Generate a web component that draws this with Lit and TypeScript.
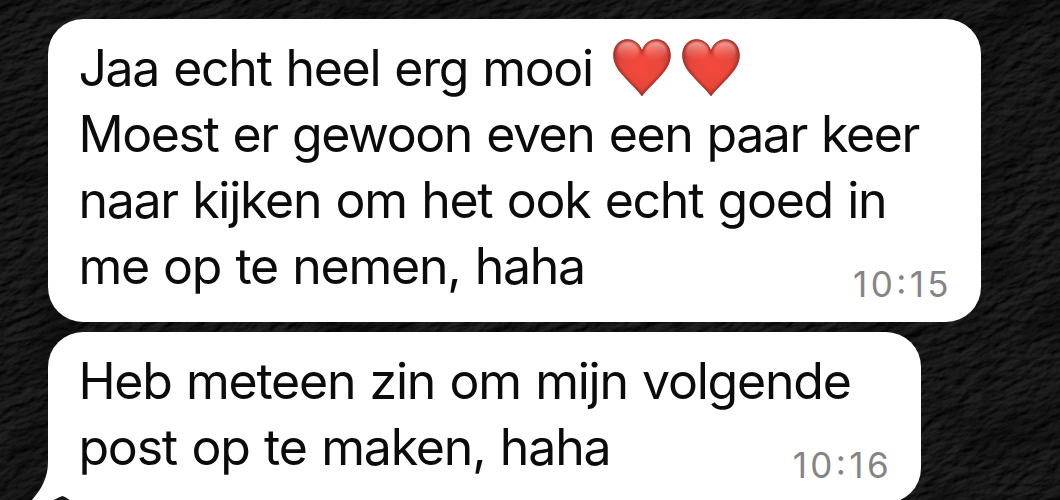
import { LitElement, html, css } from "lit";
import { customElement, property } from "lit/decorators.js";
import { styleMap } from "lit/directives/style-map.js";

interface Line {
  text: string;
  tracking: number;
  hearts?: number;
}

interface Message {
  lines: Line[];
  time: string;
  width: number;
  tail?: boolean;
}

const MESSAGES: Message[] = [
  {
    width: 933,
    time: "10:15",
    lines: [
      { text: "Jaa echt heel erg mooi", tracking: -1.36, hearts: 2 },
      { text: "Moest er gewoon even een paar keer", tracking: -1.4 },
      { text: "naar kijken om het ook echt goed in", tracking: -1.26 },
      { text: "me op te nemen, haha", tracking: -1.26 },
    ],
  },
  {
    width: 873,
    time: "10:16",
    tail: true,
    lines: [
      { text: "Heb meteen zin om mijn volgende", tracking: -1.23 },
      { text: "post op te maken, haha", tracking: -1.17 },
    ],
  },
];

@customElement("red-heart")
export class RedHeart extends LitElement {
  static styles = css`
    :host { display: block; width: 60px; height: 60px; flex: none; }
    .art { display: block; width: 60px; height: 60px; }
  `;

  render() {
    const shape =
      "M30 58.3C25.5 52 18 45.5 11 37.5C5 31 1.3 25 1.3 17.3C1.3 8 7.500 1.300 15.600 1.300C22 1.300 27.500 5.500 30 12.200C32.500 5.500 38 1.300 44.400 1.300C52.500 1.300 58.700 8 58.700 17.300C58.700 25 55 31 49 37.500C42 45.500 34.500 52 30 58.300Z";
    return html`<svg class="art" viewBox="0 0 60 60" aria-hidden="true">
      <defs>
        <radialGradient id="body" cx="30" cy="29" r="34" gradientUnits="userSpaceOnUse">
          <stop offset="0" stop-color="#f5493c" />
          <stop offset=".55" stop-color="#e9473c" />
          <stop offset="1" stop-color="#bd3a32" />
        </radialGradient>
        <linearGradient id="shine" x1="0" y1="3" x2="0" y2="23" gradientUnits="userSpaceOnUse">
          <stop offset="0" stop-color="#ffd0c8" stop-opacity=".75" />
          <stop offset="1" stop-color="#ff8073" stop-opacity="0" />
        </linearGradient>
        <filter id="soft" x="-10%" y="-10%" width="120%" height="120%"><feGaussianBlur stdDeviation=".8" /></filter>
        <clipPath id="clip"><path d=${shape} /></clipPath>
      </defs>
      <path d=${shape} fill="url(#body)" />
      <g clip-path="url(#clip)">
        <path d=${shape} fill="none" stroke="#9a2d27" stroke-width="3.4" filter="url(#soft)" opacity=".85" />
        <ellipse cx="16" cy="13" rx="11" ry="9.500" fill="url(#shine)" filter="url(#soft)" />
        <ellipse cx="44" cy="13" rx="11" ry="9.500" fill="url(#shine)" filter="url(#soft)" />
      </g>
    </svg>`;
  }
}

@customElement("chat-bubble")
export class ChatBubble extends LitElement {
  @property({ attribute: false }) message!: Message;

  static styles = css`
    :host { display: block; }
    .bubble {
      position: relative;
      isolation: isolate;
      box-sizing: border-box;
      padding: 16px 32px 23px 30.4px;
      border-radius: 35px;
      background: #fff;
      color: #0b0b0b;
    }
    .line {
      display: flex;
      align-items: center;
      height: 66px;
      font-size: 50px;
      line-height: 66px;
      word-spacing: 1.5px;
      white-space: pre;
    }
    .hearts { display: flex; gap: 9px; margin-left: 19px; }
    .time {
      position: absolute;
      right: 29px;
      bottom: 16px;
      font-size: 35px;
      line-height: 44px;
      letter-spacing: 3.4px;
      font-feature-settings: "calt" 1, "case" 1;
      color: #858585;
    }
    .tail { position: absolute; z-index: -1; left: -48px; top: 120px; width: 130px; height: 60px; }
  `;

  render() {
    const m = this.message;
    return html`<div class="bubble" style=${styleMap({ width: `${m.width}px` })}>
      ${m.tail
        ? html`<svg class="tail" viewBox="0 0 130 60" aria-hidden="true">
            <path fill="#fff" d="M48 0V10C48 25 42 37 31 49V60H110V0Z" />
            <path fill="#151515" d="M52 49Q60 44.500 62.500 44Q65 44.500 71 49V60H52Z" />
          </svg>`
        : null}
      ${m.lines.map(
        (l) => html`<div class="line">
          <span style=${styleMap({ letterSpacing: `${l.tracking}px` })}>${l.text}</span>
          ${l.hearts
            ? html`<div class="hearts">${Array.from({ length: l.hearts }, () => html`<red-heart></red-heart>`)}</div>`
            : null}
        </div>`
      )}
      <span class="time">${m.time}</span>
    </div>`;
  }
}

@customElement("app-root")
export class AppRoot extends LitElement {
  static styles = css`
    :host {
      display: block;
      position: relative;
      width: 1060px;
      height: 500px;
      overflow: hidden;
      background: #151515;
      font-family: Inter, "Liberation Sans", sans-serif;
    }
    .wall { position: absolute; inset: 0; width: 100%; height: 100%; }
    .thread {
      position: relative;
      display: flex;
      flex-direction: column;
      gap: 10px;
      padding: 19px 0 0 48px;
    }
  `;

  render() {
    return html`
      <svg class="wall" viewBox="0 0 1060 500" aria-hidden="true">
        <filter id="stone" x="0" y="0" width="100%" height="100%" color-interpolation-filters="sRGB">
          <feTurbulence type="fractalNoise" baseFrequency=".06 .12" numOctaves="5" seed="8" />
          <feColorMatrix values="0 0 0 0 0  0 0 0 0 0  0 0 0 0 0  1 0 0 0 0" />
          <feDiffuseLighting surfaceScale="3" diffuseConstant=".145" lighting-color="#fff" result="relief">
            <feDistantLight azimuth="250" elevation="40" />
          </feDiffuseLighting>
          <feTurbulence type="fractalNoise" baseFrequency=".012 .02" numOctaves="3" seed="3" />
          <feColorMatrix values="1.200 0 0 0 .35  1.200 0 0 0 .35  1.200 0 0 0 .35  0 0 0 0 1" result="patches" />
          <feComposite in="relief" in2="patches" operator="arithmetic" k1="1" k2="0" k3="0" k4="0" />
        </filter>
        <g transform="rotate(-18 530 250)">
          <rect x="-100" y="-250" width="1260" height="1000" filter="url(#stone)" />
        </g>
      </svg>
      <div class="thread">
        ${MESSAGES.map((m) => html`<chat-bubble .message=${m}></chat-bubble>`)}
      </div>
    `;
  }
}
